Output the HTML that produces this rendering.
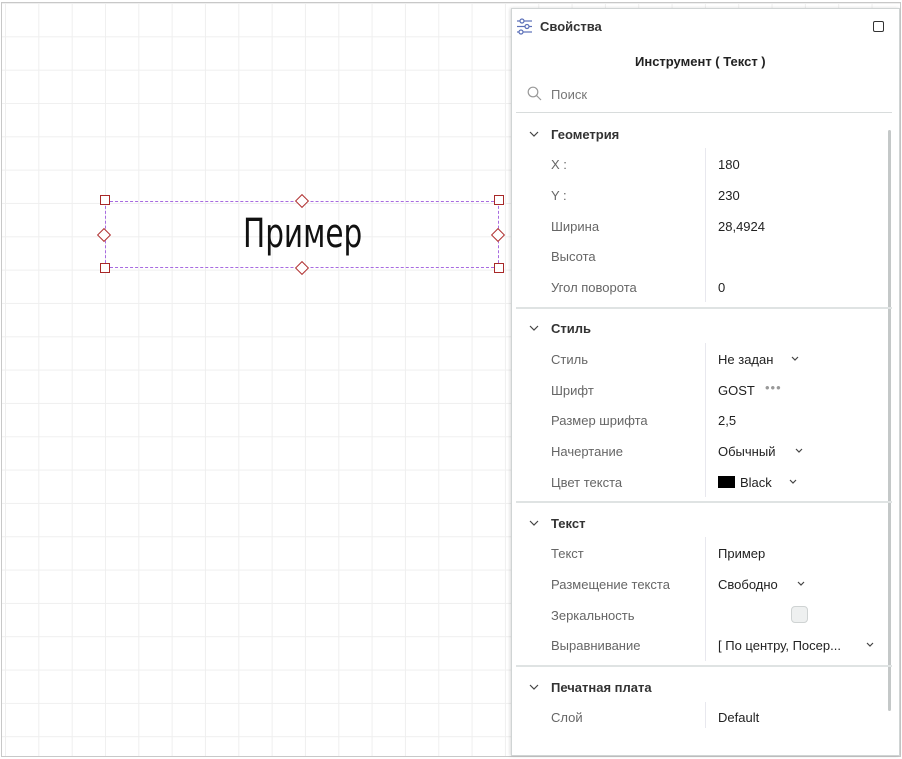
<!DOCTYPE html>
<html><head><meta charset="utf-8"><style>
*{margin:0;padding:0;box-sizing:border-box}
body{width:902px;height:759px;overflow:hidden;background:#fff;font-family:"Liberation Sans",sans-serif;position:relative}
#canvas{position:absolute;left:1px;top:2px;width:900px;height:755px;border:1px solid #c8c8c8;
background-image:linear-gradient(#efefef 1px,transparent 1px),linear-gradient(90deg,#efefef 1px,transparent 1px);
background-size:33.33px 33.33px;background-position:3px 0px}
#panel{position:absolute;left:511px;top:8px;width:389px;height:748px;background:#fff;border:1px solid #d0d4d4;box-shadow:-1px 0 3px rgba(0,0,0,.15)}
.t{position:absolute;font-size:13px;color:#222;white-space:nowrap;top:1px}
.l{color:#666}
.h{font-weight:bold;color:#333}
.sep{position:absolute;left:516px;width:376px;height:2px;background:#dfe3e3}
.vd{position:absolute;left:705px;width:1px;background:#e8e8ee}
.cv{position:absolute}
.hd{position:absolute;width:10px;height:10px;border:1px solid #a82828;background:#fff}
.dm{position:absolute;width:10px;height:10px;border:1px solid #b03030;background:#fff;transform:rotate(45deg)}
</style></head><body>
<div id="canvas"></div>
<div style="position:absolute;left:105px;top:201px;width:394px;height:67px;border:1px dashed #a86be0"></div>
<div class="t" style="left:243px;top:211px;font-size:40px;font-family:'DejaVu Sans Condensed','Liberation Sans Narrow',sans-serif;font-weight:200;color:#111;transform:scaleX(.82);transform-origin:left">Пример</div>
<div class="hd" style="left:100px;top:195px"></div><div class="hd" style="left:494px;top:195px"></div>
<div class="hd" style="left:100px;top:263px"></div><div class="hd" style="left:494px;top:263px"></div>
<div class="dm" style="left:297px;top:196px"></div><div class="dm" style="left:297px;top:263px"></div>
<div class="dm" style="left:99px;top:230px"></div><div class="dm" style="left:493px;top:230px"></div>
<div id="panel"></div>
<svg style="position:absolute;left:516px;top:18px" width="17" height="17" viewBox="0 0 17 17" fill="none" stroke="#5a6fb8" stroke-width="1.2"><line x1="1" y1="3" x2="16" y2="3"/><line x1="1" y1="8.5" x2="16" y2="8.5"/><line x1="1" y1="14" x2="16" y2="14"/><circle cx="6" cy="3" r="2" fill="#fff"/><circle cx="11" cy="8.5" r="2" fill="#fff"/><circle cx="5" cy="14" r="2" fill="#fff"/></svg>
<div class="t h" style="left:540px;top:19px">Свойства</div>
<div style="position:absolute;left:873px;top:21px;width:11px;height:11px;border:1.3px solid #333;border-radius:2px"></div>
<div class="t h" style="left:635px;top:54px;color:#222">Инструмент ( Текст )</div>
<svg style="position:absolute;left:527px;top:86px" width="15" height="15" viewBox="0 0 15 15" fill="none" stroke="#999" stroke-width="1.2"><circle cx="6" cy="6" r="4.8"/><line x1="9.5" y1="9.5" x2="14" y2="14"/></svg>
<div class="t l" style="left:551px;top:87px;color:#777">Поиск</div>
<div class="sep" style="top:112px;height:1px;background:#d8dcdc"></div>
<div style="position:absolute;left:888px;top:130px;width:3px;height:581px;background:#c4c8c8;border-radius:2px"></div>

<svg width="0" height="0" style="position:absolute"><defs><polyline id="c" points="1,1 5,5 9,1" fill="none" stroke="#444" stroke-width="1.2"/><polyline id="s" points="1,1 4,4 7,1" fill="none" stroke="#444" stroke-width="1.2"/></defs></svg>

<svg class="cv" style="left:529px;top:131px" width="10" height="7"><use href="#c"/></svg><div class="t h" style="left:551px;top:127px">Геометрия</div>
<div class="vd" style="top:148px;height:154px"></div>
<div class="t l" style="left:551px;top:157px">X :</div><div class="t" style="left:718px;top:157px">180</div>
<div class="t l" style="left:551px;top:188px">Y :</div><div class="t" style="left:718px;top:188px">230</div>
<div class="t l" style="left:551px;top:219px">Ширина</div><div class="t" style="left:718px;top:219px">28,4924</div>
<div class="t l" style="left:551px;top:249px">Высота</div>
<div class="t l" style="left:551px;top:280px">Угол поворота</div><div class="t" style="left:718px;top:280px">0</div>
<div class="sep" style="top:307px"></div>

<svg class="cv" style="left:529px;top:325px" width="10" height="7"><use href="#c"/></svg><div class="t h" style="left:551px;top:321px">Стиль</div>
<div class="vd" style="top:343px;height:154px"></div>
<div class="t l" style="left:551px;top:352px">Стиль</div><div class="t" style="left:718px;top:352px">Не задан</div><svg class="cv" style="left:791px;top:356px" width="8" height="6"><use href="#s"/></svg>
<div class="t l" style="left:551px;top:383px">Шрифт</div><div class="t" style="left:718px;top:383px">GOST</div><div class="t" style="left:765px;top:380px;color:#999;letter-spacing:1px">•••</div>
<div class="t l" style="left:551px;top:413px">Размер шрифта</div><div class="t" style="left:718px;top:413px">2,5</div>
<div class="t l" style="left:551px;top:444px">Начертание</div><div class="t" style="left:718px;top:444px">Обычный</div><svg class="cv" style="left:795px;top:448px" width="8" height="6"><use href="#s"/></svg>
<div class="t l" style="left:551px;top:475px">Цвет текста</div><div style="position:absolute;left:718px;top:476px;width:17px;height:12px;background:#000"></div><div class="t" style="left:740px;top:475px">Black</div><svg class="cv" style="left:789px;top:479px" width="8" height="6"><use href="#s"/></svg>
<div class="sep" style="top:501px"></div>

<svg class="cv" style="left:529px;top:520px" width="10" height="7"><use href="#c"/></svg><div class="t h" style="left:551px;top:516px">Текст</div>
<div class="vd" style="top:537px;height:124px"></div>
<div class="t l" style="left:551px;top:546px">Текст</div><div class="t" style="left:718px;top:546px">Пример</div>
<div class="t l" style="left:551px;top:577px">Размещение текста</div><div class="t" style="left:718px;top:577px">Свободно</div><svg class="cv" style="left:797px;top:581px" width="8" height="6"><use href="#s"/></svg>
<div class="t l" style="left:551px;top:608px">Зеркальность</div><div style="position:absolute;left:791px;top:606px;width:17px;height:17px;border:1px solid #cfd3d3;border-radius:4px;background:#eef0f0"></div>
<div class="t l" style="left:551px;top:638px">Выравнивание</div><div class="t" style="left:718px;top:638px">[ По центру, Посер...</div><svg class="cv" style="left:866px;top:642px" width="8" height="6"><use href="#s"/></svg>
<div class="sep" style="top:665px"></div>

<svg class="cv" style="left:529px;top:684px" width="10" height="7"><use href="#c"/></svg><div class="t h" style="left:551px;top:680px">Печатная плата</div>
<div class="vd" style="top:702px;height:26px"></div>
<div class="t l" style="left:551px;top:710px">Слой</div><div class="t" style="left:718px;top:710px">Default</div>
</body></html>
